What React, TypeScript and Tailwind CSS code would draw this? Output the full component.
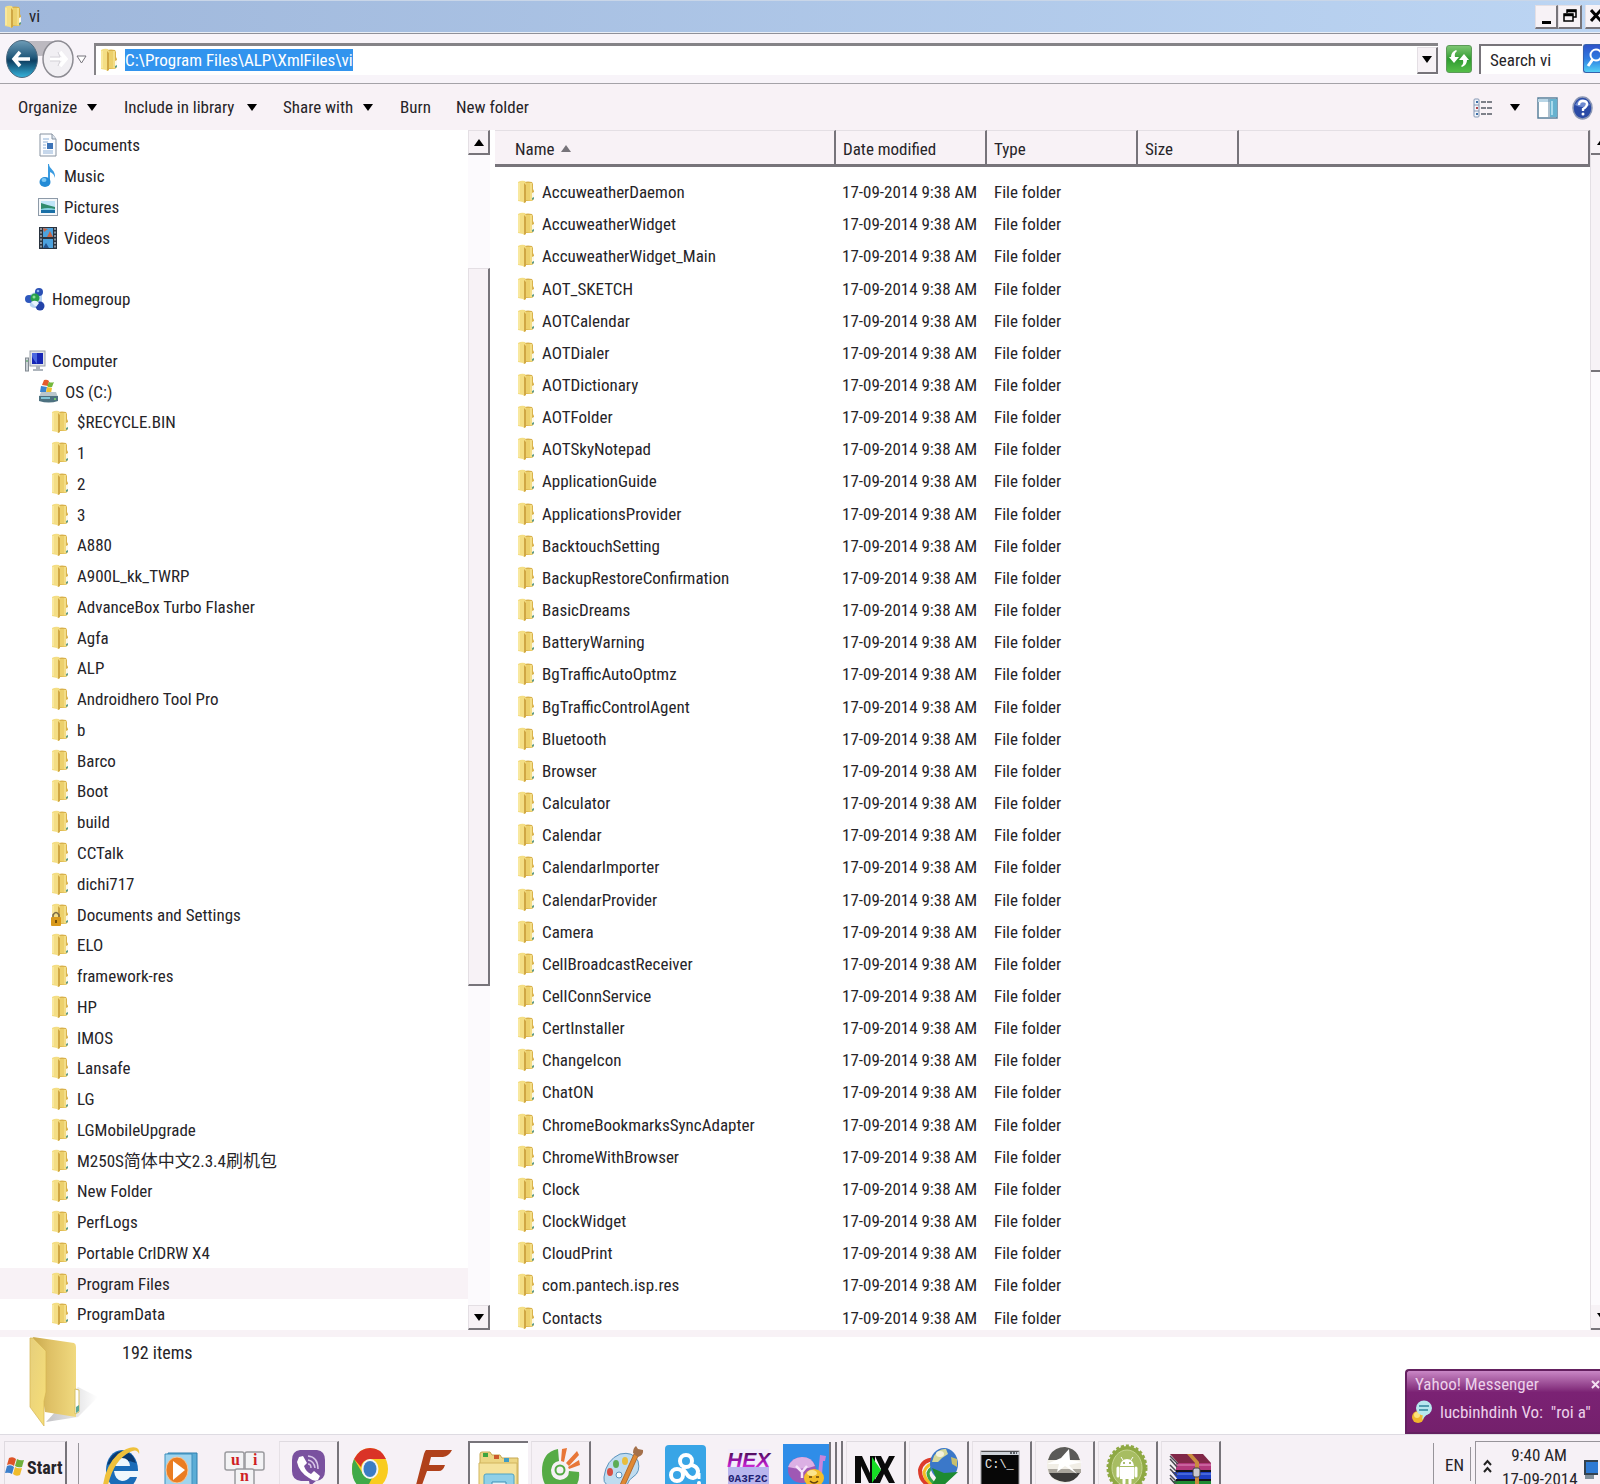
import type { ReactNode } from "react";

type TreeItem = {
  name: string;
  icon?: ReactNode;
  level?: number;
  selected?: boolean;
};

const DATE = "17-09-2014 9:38 AM";

const files = [
  "AccuweatherDaemon", "AccuweatherWidget", "AccuweatherWidget_Main", "AOT_SKETCH",
  "AOTCalendar", "AOTDialer", "AOTDictionary", "AOTFolder", "AOTSkyNotepad",
  "ApplicationGuide", "ApplicationsProvider", "BacktouchSetting",
  "BackupRestoreConfirmation", "BasicDreams", "BatteryWarning", "BgTrafficAutoOptmz",
  "BgTrafficControlAgent", "Bluetooth", "Browser", "Calculator", "Calendar",
  "CalendarImporter", "CalendarProvider", "Camera", "CellBroadcastReceiver",
  "CellConnService", "CertInstaller", "ChangeIcon", "ChatON",
  "ChromeBookmarksSyncAdapter", "ChromeWithBrowser", "Clock", "ClockWidget",
  "CloudPrint", "com.pantech.isp.res", "Contacts",
];

const folders = [
  "$RECYCLE.BIN", "1", "2", "3", "A880", "A900L_kk_TWRP", "AdvanceBox Turbo Flasher",
  "Agfa", "ALP", "Androidhero Tool Pro", "b", "Barco", "Boot", "build", "CCTalk",
  "dichi717", "Documents and Settings", "ELO", "framework-res", "HP", "IMOS",
  "Lansafe", "LG", "LGMobileUpgrade", "M250S简体中文2.3.4刷机包", "New Folder",
  "PerfLogs", "Portable CrlDRW X4", "Program Files", "ProgramData",
];

function FolderIcon({ locked = false }: { locked?: boolean }) {
  return (
    <svg width="18" height="24" viewBox="0 0 18 24" className="shrink-0">
      <path d="M7 2q4-1 8 0l1 2v5l1 2v8l-2 2H7z" fill="#d9b24c" />
      <path d="M8 3h7v18l-7-1z" fill="#ecd06c" />
      <path d="M13 3h2v17h-2z" fill="#f3dd86" />
      <path d="M15 13l2-1v6l-2 1z" fill="#fbf8ea" />
      <path d="M15 18l2-1v2l-2 1z" fill="#5d9c8c" />
      <path d="M1 2q3-2 7-1l1 3v18l-2 1-1-1-5-1z" fill="#f4de85" />
      <path d="M7 3l2 2v17l-2 1z" fill="#d0a744" />
      <path d="M2 3v17" stroke="#fdf2b8" />
      {locked && (
        <g>
          <path d="M2 15v-3q3-5 6 0v3" fill="none" stroke="#7b6a45" strokeWidth="1.6" />
          <rect x="0" y="14" width="10" height="9" rx="1" fill="#d99a1c" />
          <path d="M5 17v3" stroke="#5c3c06" strokeWidth="1.6" />
        </g>
      )}
    </svg>
  );
}

function DocumentIcon() {
  return (
    <svg width="20" height="24" viewBox="0 0 20 24" className="shrink-0">
      <path d="M2 1h12l4 5v17H2z" fill="#fbfdff" stroke="#8793a1" />
      <path d="M14 1v5h4" fill="#dce5ee" stroke="#8793a1" />
      <path d="M5 6h6M5 9h5M5 12h3M5 15h3M5 18h10M5 20h10" stroke="#8fb0d6" />
      <rect x="9" y="10" width="6" height="6" fill="#3c74b8" />
    </svg>
  );
}

function MusicIcon() {
  return (
    <svg width="20" height="24" viewBox="0 0 20 24" className="shrink-0">
      <path d="M11 0c0 5 7 6 6 14-1-4-3-5-5-6v10h-2V0z" fill="#3a9be0" />
      <ellipse cx="7" cy="18" rx="5.500" ry="5" fill="#238bd6" />
      <ellipse cx="6" cy="16" rx="2.500" ry="2" fill="#7cc8f5" />
    </svg>
  );
}

function PictureIcon() {
  return (
    <svg width="20" height="20" viewBox="0 0 20 20" className="shrink-0">
      <rect x="0.5" y="1.500" width="19" height="17" fill="#f4f7fa" stroke="#8d9aa8" />
      <rect x="3" y="4" width="14" height="12" fill="#bfe5f8" />
      <path d="M3 6q6 2 14 4v3H3z" fill="#2f8b6d" />
      <path d="M3 12h14v4H3z" fill="#196fa6" />
      <path d="M3 12q7-2 14 0v1H3z" fill="#83cfe0" />
    </svg>
  );
}

function VideoIcon() {
  return (
    <svg width="20" height="24" viewBox="0 0 20 24" className="shrink-0">
      <rect x="1" y="1" width="18" height="22" fill="#29333f" />
      <path d="M3 2v20M17 2v20" stroke="#aab4be" strokeWidth="1.500" strokeDasharray="2 1.500" />
      <rect x="5" y="2" width="10" height="9" fill="#4da2de" />
      <rect x="5" y="13" width="10" height="9" fill="#4da2de" />
      <path d="M9 11l3-6 3 6zM5 2l5 1-4 3z" fill="#c96644" />
      <path d="M5 22l3-5 3 5z" fill="#23538c" />
    </svg>
  );
}

function HomegroupIcon() {
  return (
    <svg width="21" height="23" viewBox="0 0 21 23" className="shrink-0">
      <path d="M4 8q6-7 13-1v8q-6 8-12 3z" fill="#b8d4f2" />
      <circle cx="14" cy="4" r="4" fill="#2a50b4" />
      <circle cx="4" cy="11" r="4" fill="#2e58bd" />
      <circle cx="15" cy="18" r="4.500" fill="#2343a8" />
      <circle cx="10" cy="10" r="4.500" fill="#28a04a" />
      <path d="M6 14q5-3 8 1l-3 4z" fill="#e7f3fc" />
      <circle cx="9" cy="9" r="1.500" fill="#8ee09b" />
      <circle cx="13" cy="3" r="1.300" fill="#8fb2ee" />
    </svg>
  );
}

function ComputerIcon() {
  return (
    <svg width="21" height="22" viewBox="0 0 21 22" className="shrink-0">
      <rect x="0.5" y="8" width="3" height="13" fill="#cbd1d6" stroke="#828a92" />
      <path d="M1 11h2" stroke="#3d9a4a" />
      <rect x="5" y="1" width="15" height="15" fill="#e1e4e8" stroke="#9aa1aa" />
      <rect x="7" y="3" width="11" height="11" fill="#1727b5" />
      <path d="M7 3h5v11q-4-5-5-8z" fill="#4b68e0" />
      <path d="M11 16h4v3h3v2H8v-2h3z" fill="#aeb5bc" />
    </svg>
  );
}

function DriveIcon() {
  return (
    <svg width="21" height="25" viewBox="0 0 21 25" className="shrink-0">
      <path d="M6 1q3-1 5 1l-1 5-6-1z" fill="#e45a2b" />
      <path d="M11 3q3 1 5 0l-2 5q-3 1-5-1z" fill="#74b83c" />
      <path d="M3 7l6 1-1 5H2z" fill="#3b83cf" />
      <path d="M9 8l5 1-1 5H8z" fill="#f1c12e" />
      <path d="M3 13h15l2 5H1z" fill="#b9c6cc" />
      <path d="M1 17h19v5q-9 3-19 0z" fill="#4d7180" />
      <path d="M3 19h9" stroke="#7fc3d6" strokeWidth="2" />
      <circle cx="17" cy="20" r="1" fill="#7be36d" />
    </svg>
  );
}

const tree: TreeItem[] = [
  { name: "Documents", icon: <DocumentIcon />, level: 1 },
  { name: "Music", icon: <MusicIcon />, level: 1 },
  { name: "Pictures", icon: <PictureIcon />, level: 1 },
  { name: "Videos", icon: <VideoIcon />, level: 1 },
  { name: "" },
  { name: "Homegroup", icon: <HomegroupIcon />, level: 0 },
  { name: "" },
  { name: "Computer", icon: <ComputerIcon />, level: 0 },
  { name: "OS (C:)", icon: <DriveIcon />, level: 1 },
  ...folders.map((name) => ({
    name,
    icon: <FolderIcon locked={name === "Documents and Settings"} />,
    level: 2,
    selected: name === "Program Files",
  })),
];

const indents = ["pl-[25px] gap-[6px]", "pl-[38px] gap-[6px]", "pl-[51px] gap-[8px]"];

function Caret({ up = false }: { up?: boolean }) {
  return (
    <svg width="10" height="7" viewBox="0 0 10 7" className="shrink-0">
      <path d={up ? "M0 7h10L5 0z" : "M0 0h10L5 7z"} fill="#000" />
    </svg>
  );
}

const raised = "bg-[#f7f2f6] border-t border-l border-t-[#e4dfe4] border-l-[#e4dfe4] border-r-2 border-b-2 border-r-[#77747a] border-b-[#77747a]";

function TitleBar() {
  return (
    <header className="flex h-[33px] shrink-0 items-center border-y border-t-[#c9d6e8] border-b-[#e9eef6] bg-linear-to-r from-[#9fb7db] to-[#bcd5f3] pl-1">
      <FolderIcon />
      <h1 className="ml-[7px] flex-1 text-[17px]">vi</h1>
      <button aria-label="Minimize" className={`flex h-[24px] w-[23px] items-end justify-center pb-[3px] ${raised}`}>
        <span className="h-[3px] w-[9px] bg-black" />
      </button>
      <button aria-label="Restore" className={`flex h-[24px] w-[24px] items-center justify-center ${raised}`}>
        <svg width="14" height="14" viewBox="0 0 14 14" fill="none" stroke="#000">
          <path d="M4 4V1h9v7h-3" strokeWidth="1.500" />
          <path d="M4 2h9" strokeWidth="2.500" />
          <rect x="1" y="5" width="9" height="7" strokeWidth="1.500" />
          <path d="M1 6h9" strokeWidth="2.500" />
        </svg>
      </button>
      <button aria-label="Close" className="ml-[3px] flex h-[24px] w-[15px] items-center justify-start overflow-hidden border-b-2 border-l border-b-[#77747a] border-l-[#e4dfe4] bg-[#f7f2f6] pl-1">
        <svg width="13" height="13" viewBox="0 0 13 13" className="shrink-0">
          <path d="M1 1l10 11M11 1L1 12" stroke="#000" strokeWidth="3" />
        </svg>
      </button>
    </header>
  );
}

function AddressBar() {
  return (
    <div className="flex h-[51px] shrink-0 items-center border-y border-t-[#8f9099] border-b-[#a5a3a8] bg-[#f8f4f9] pl-[6px]">
      <svg width="82" height="40" viewBox="0 0 82 40" className="shrink-0" role="img" aria-label="Back and forward">
        <defs>
          <linearGradient id="back" x1="0" y1="0" x2="0" y2="1">
            <stop offset="0" stopColor="#6f9db8" />
            <stop offset="0.45" stopColor="#235a7c" />
            <stop offset="0.55" stopColor="#0d3f62" />
            <stop offset="1" stopColor="#37b4dc" />
          </linearGradient>
        </defs>
        <path d="M16 2h36v12q-18 6-36 0z" fill="#bcb9c0" />
        <ellipse cx="16" cy="20" rx="15.500" ry="18.500" fill="url(#back)" stroke="#4c6a80" />
        <path d="M24 20H9M14 13l-6 7 6 7" stroke="#fff" strokeWidth="3.500" fill="none" />
        <ellipse cx="52" cy="20" rx="15" ry="18" fill="#f1eff3" stroke="#8c8b92" strokeWidth="1.500" />
        <path d="M44 20h15M54 13l6 7-6 7" stroke="#fff" strokeWidth="3.500" fill="none" />
        <path d="M44 18h10l-2-5M44 22h10l-2 5" stroke="#d4d2d8" fill="none" />
        <path d="M71 17h9l-4.500 7z" fill="#fff" stroke="#77747c" />
      </svg>
      <div className="ml-[6px] flex h-[32px] min-w-0 flex-1 items-center border-t-[3px] border-l-2 border-t-[#858387] border-l-[#858387] bg-white pl-[4px]">
        <FolderIcon />
        <input
          aria-label="Address"
          defaultValue="C:\Program Files\ALP\XmlFiles\vi"
          className="ml-[7px] field-sizing-content h-[22px] bg-[#3294ee] text-[17px] leading-[22px] text-white outline-none"
        />
        <button aria-label="Previous locations" className={`ml-auto flex h-[27px] w-[21px] items-center justify-center ${raised}`}>
          <Caret />
        </button>
      </div>
      <button aria-label="Refresh" className="ml-[8px] h-[28px] w-[26px] rounded-[3px] border border-[#5c9a58] bg-linear-to-b from-[#7cc672] via-[#2f9c31] to-[#54bd48]">
        <svg width="24" height="26" viewBox="0 0 24 26" fill="#fff">
          <path d="M9 4l1 1q-3 2-2 6h4l-5 6-5-6h2q0-5 5-7z" />
          <path d="M15 21l-1-1q3-2 2-6h-4l5-6 5 6h-2q0 5-5 7z" />
        </svg>
      </button>
      <input
        type="text"
        aria-label="Search"
        placeholder="Search vi"
        className="ml-[7px] h-[30px] w-[103px] border-t-2 border-l-2 border-t-[#77747a] border-l-[#77747a] bg-white pl-[9px] text-[17px] outline-none placeholder:text-[#262428]"
      />
      <button aria-label="Go" className="ml-px h-[29px] w-[17px] overflow-hidden rounded-l-[3px] border border-r-0 border-[#3561ad] bg-linear-to-b from-[#2e52c9] via-[#2f7be0] to-[#55d0f5]">
        <svg width="16" height="27" viewBox="0 0 16 27" fill="none" stroke="#fff">
          <circle cx="12" cy="10" r="5.500" strokeWidth="2" />
          <path d="M9 14l-5 7" strokeWidth="3" />
        </svg>
      </button>
    </div>
  );
}

function Toolbar() {
  return (
    <nav className="flex h-[46px] shrink-0 items-center bg-[#f8f2f6] pt-px pr-[7px] pl-[18px] text-[17px] whitespace-nowrap">
      <button className="flex w-[79px] items-center justify-between">Organize <Caret /></button>
      <button className="ml-[27px] flex w-[133px] items-center justify-between">Include in library <Caret /></button>
      <button className="ml-[26px] flex w-[90px] items-center justify-between">Share with <Caret /></button>
      <button className="ml-[27px] w-[31px] text-left">Burn</button>
      <button className="ml-[25px]">New folder</button>
      <button aria-label="Change your view" className="ml-auto flex items-center gap-[17px]">
        <svg width="20" height="20" viewBox="0 0 20 20">
          <rect x="1" y="1" width="5" height="18" rx="1" fill="#f4f5fa" stroke="#8498b4" />
          <path d="M1 7h5M1 13h5" stroke="#8498b4" />
          <path d="M3 4h2M3 16h2" stroke="#3c6ea6" strokeWidth="2" />
          <path d="M3 10h2" stroke="#b0464c" strokeWidth="2" />
          <path d="M8 4h12M8 10h12M8 16h12" stroke="#565c66" strokeWidth="1.500" strokeDasharray="5 1" />
        </svg>
        <Caret />
      </button>
      <button aria-label="Preview pane" className="ml-[17px]">
        <svg width="21" height="22" viewBox="0 0 21 22">
          <rect x="1" y="1" width="19" height="20" fill="#fff" stroke="#5a819c" strokeWidth="1.500" />
          <path d="M1 2h19v3H1z" fill="#b9d6e6" />
          <rect x="13" y="2" width="7" height="18" fill="#66b2cf" />
          <path d="M15 4v14" stroke="#a9dbec" strokeWidth="2" />
          <path d="M12 2v18" stroke="#5a819c" />
        </svg>
      </button>
      <button aria-label="Get help" className="ml-[14px]">
        <svg width="21" height="24" viewBox="0 0 21 24">
          <ellipse cx="10.500" cy="12" rx="9.500" ry="11" fill="#2b4ba6" stroke="#8b97b4" strokeWidth="1.500" />
          <path d="M3 9q7-12 15 0-8 4-15 0z" fill="#6f8bd0" />
          <path d="M7 9q0-4 4-4t4 3q0 3-4 5v2" fill="none" stroke="#fff" strokeWidth="2.300" />
          <circle cx="11" cy="18" r="1.500" fill="#fff" />
        </svg>
      </button>
    </nav>
  );
}

function FolderTree() {
  return (
    <aside className="flex w-[494px] shrink-0 bg-white">
      <ul className="flex min-w-0 flex-1 flex-col">
        {tree.map((item, i) => (
          <li key={i} className={`flex min-h-0 flex-1 items-center ${item.selected ? "bg-[#f8f2f6]" : ""}`}>
            {item.name && (
              <button className={`flex items-center text-[17px] leading-[24px] whitespace-nowrap ${indents[item.level ?? 0]}`}>
                {item.icon}
                {item.name}
              </button>
            )}
          </li>
        ))}
      </ul>
      <div className="mr-[4px] flex w-[22px] flex-col bg-[#fcfafd]">
        <button aria-label="Scroll up" className={`flex h-[25px] items-center justify-center ${raised}`}><Caret up /></button>
        <div className="flex-[113]" />
        <div className={`flex-[717] ${raised}`} />
        <div className="flex-[320]" />
        <button aria-label="Scroll down" className={`flex h-[25px] items-center justify-center ${raised}`}><Caret /></button>
      </div>
    </aside>
  );
}

const th = "border-r-2 border-b-3 border-[#77747a] border-t border-t-[#e4dfe4] bg-[#f8f2f6] pt-[2px] pl-[7px] text-left font-normal";

function FileList() {
  return (
    <main className="flex min-w-0 flex-1 bg-white pl-px">
      <div className="-mb-1 min-w-0 flex-1">
        <table className="h-full w-full table-fixed border-separate border-spacing-0 text-[17px] leading-[24px]">
          <colgroup>
            <col className="w-[341px]" />
            <col className="w-[151px]" />
            <col className="w-[151px]" />
            <col className="w-[101px]" />
            <col />
          </colgroup>
          <thead>
            <tr className="h-[37px]">
              <th className="border-t border-r-2 border-b-3 border-[#77747a] border-t-[#e4dfe4] bg-[#f8f2f6] pt-[2px] pl-[20px] text-left font-normal">
                Name
                <svg width="10" height="7" viewBox="0 0 10 7" className="mb-[3px] ml-[7px] inline">
                  <path d="M0 7h10L5 0z" fill="#77747a" />
                </svg>
              </th>
              <th className={th}>Date modified</th>
              <th className={th}>Type</th>
              <th className={th}>Size</th>
              <th className={th} aria-label="Empty" />
            </tr>
            <tr className="h-[9px]" />
          </thead>
          <tbody>
            {files.map((name) => (
              <tr key={name}>
                <td className="p-0 pl-[22px]">
                  <div className="flex items-center gap-[7px]">
                    <FolderIcon />
                    {name}
                  </div>
                </td>
                <td className="p-0 pl-[6px] whitespace-nowrap">{DATE}</td>
                <td className="p-0 pl-[7px]">File folder</td>
                <td className="p-0" />
                <td className="p-0" />
              </tr>
            ))}
          </tbody>
        </table>
      </div>
      <div className="flex w-[10px] flex-col border-l border-[#e4dfe4] bg-[#fcfafd]">
        <button aria-label="Scroll list up" className="flex h-[25px] items-center overflow-hidden border-b-2 border-[#77747a] bg-[#f7f2f6] pl-[6px]"><Caret up /></button>
        <div className="flex-[215] border-b-2 border-[#77747a] bg-[#f7f2f6]" />
        <div className="flex-[935]" />
        <button aria-label="Scroll list down" className="flex h-[25px] items-center overflow-hidden border-b-2 border-[#77747a] bg-[#f7f2f6] pl-[6px]"><Caret /></button>
      </div>
    </main>
  );
}

function DetailsPane() {
  return (
    <section className="flex h-[104px] shrink-0 items-start border-t-[7px] border-[#f8f2f6] bg-white pl-[28px]">
      <svg width="72" height="92" viewBox="0 0 72 92" className="shrink-0">
        <defs>
          <linearGradient id="flap" x1="0" y1="0" x2="1" y2="1">
            <stop offset="0" stopColor="#e6cf7c" />
            <stop offset="1" stopColor="#f7df78" />
          </linearGradient>
          <linearGradient id="inside" x1="0" y1="0" x2="1" y2="0">
            <stop offset="0" stopColor="#c9a94d" />
            <stop offset="0.4" stopColor="#dfc166" />
            <stop offset="1" stopColor="#f0d97f" />
          </linearGradient>
          <linearGradient id="shade" x1="0" y1="0" x2="1" y2="0">
            <stop offset="0" stopColor="#9a9aa0" />
            <stop offset="1" stopColor="#fff" />
          </linearGradient>
        </defs>
        <path d="M50 50l20 10-20 20-32 5z" fill="url(#shade)" opacity="0.6" />
        <path d="M5 0l41 6q2 1 2 4v70l-31-5z" fill="url(#inside)" />
        <path d="M47 52l4 1v22l-4 2z" fill="#fff" stroke="#d5c069" />
        <path d="M48 70l3-2v6l-3 2z" fill="#5aa795" />
        <path d="M2 1h3l13 13v41l-2 9v25L2 70z" fill="url(#flap)" stroke="#d6b552" strokeWidth="0.7" />
      </svg>
      <p className="mt-[4px] ml-[22px] text-[18px] leading-[24px]">192 items</p>
    </section>
  );
}

function Messenger() {
  return (
    <div role="status" className="absolute right-0 bottom-[50px] h-[65px] w-[195px] rounded-tl-[4px] border-2 border-r-0 border-[#642060] bg-linear-to-b from-[#c987c6] via-[#7b2274] via-35% to-[#74206c] text-[17px] leading-[26px] whitespace-nowrap text-[#ecd0ea]">
      <div className="flex items-center justify-between pl-[8px]">
        <span>Yahoo! Messenger</span>
        <button aria-label="Dismiss" className="w-[9px] overflow-hidden">
          <svg width="9" height="9" viewBox="0 0 9 9"><path d="M1 1l7 7M8 1L1 8" stroke="#f4dff2" strokeWidth="2" /></svg>
        </button>
      </div>
      <div className="mt-[2px] flex items-center gap-[8px] pl-[4px]">
        <svg width="21" height="24" viewBox="0 0 21 24" className="shrink-0">
          <circle cx="7" cy="17" r="6" fill="#f0b62c" />
          <circle cx="6" cy="15" r="3" fill="#fbe27d" />
          <ellipse cx="13" cy="8" rx="8" ry="7.500" fill="#b7e8ee" />
          <path d="M12 14l-1 6 6-7z" fill="#b7e8ee" />
          <path d="M8 6h10M8 10h9" stroke="#31859c" strokeWidth="1.500" />
        </svg>
        <span className="whitespace-pre">lucbinhdinh Vo:  "roi a"</span>
      </div>
    </div>
  );
}

/* Task icons share a 60 x 44 box; the screen edge cuts them off at the bottom. */
const ieIcon = (
  <>
    <ellipse cx="32" cy="29" rx="16" ry="20" fill="#1a6cb8" />
    <path d="M17 24q4-13 15-14 11 1 14 12-13-6-29 2z" fill="#0b3a70" />
    <path d="M24 25q1-8 8-8t8 8zM24 30h25v6h-9q-3 4-8 4-7-1-8-10z" fill="#eef7fd" />
    <path d="M13 44q3-20 15-31Q40 4 47 7q3 2 2 6-2-6-9-2-16 8-22 33z" fill="#efc13c" />
  </>
);

const wmpIcon = (
  <>
    <path d="M15 12h29v32H15z" fill="#5badd6" stroke="#2f7fae" />
    <path d="M12 13h27v31H12z" fill="#9fd4ee" stroke="#3d8fbd" />
    <ellipse cx="24" cy="29" rx="11" ry="13" fill="#ea7d22" stroke="#f7c79b" />
    <path d="M20 20l12 9-12 10z" fill="#fff" />
  </>
);

const unikeyIcon = (
  <g stroke="#9b9b9f" strokeWidth="1.500" fill="#f3f3f5">
    <rect x="9" y="11" width="19" height="18" rx="2" />
    <rect x="29" y="11" width="19" height="18" rx="2" />
    <rect x="19" y="28" width="19" height="18" rx="2" />
    <g fill="#cf1f24" stroke="none" fontFamily="Liberation Serif, serif" fontWeight="bold" fontSize="16">
      <text x="15" y="24">u</text>
      <text x="37" y="24">i</text>
      <text x="24" y="40">n</text>
    </g>
  </g>
);

const viberIcon = (
  <>
    <path d="M20 8h17q8 1 8 10v11q0 9-9 10l-6 5-1-5h-8q-9-1-9-10V18q0-9 8-10z" fill="#7a519f" />
    <path d="M19 15l4-1 4 7-3 3q2 6 7 8l3-3 6 5-2 4q-4 2-9-2-10-6-12-16z" fill="#fff" />
    <path d="M28 14q10 1 10 13M28 18q6 1 7 8M28 22q3 0 3 4" stroke="#d8c7e8" strokeWidth="1.500" fill="none" />
  </>
);

const chromeIcon = (
  <>
    <ellipse cx="28" cy="28" rx="18" ry="21" fill="#f9cc1f" />
    <path d="M12 18q6-11 16-11 11 0 16 11H28q-8 1-9 8z" fill="#da3327" />
    <path d="M12 18l9 15q3 5 9 4l-6 12q-14-4-14-21 0-6 2-10z" fill="#3faa49" />
    <ellipse cx="28" cy="28" rx="8.500" ry="10" fill="#f2f4f5" />
    <ellipse cx="28" cy="28" rx="6.500" ry="8" fill="#3b7cc4" />
  </>
);

const fIcon = (
  <path d="M21 9h26q-3 6-9 7H26l-2 8h16q-2 6-6 6H22l-5 14h-6l8-31q1-3 2-4z" fill="#b0411b" />
);

const explorerIcon = (
  <>
    <path d="M10 11q0-2 2-2h8l2 3h8l2 3h7l9 0v29H10z" fill="#ecd684" stroke="#c6a852" />
    <path d="M9 20h38v24H9z" fill="#f5e39d" stroke="#d2b55f" />
    <path d="M13 10h5v4h-5z" fill="#3fa53f" />
    <path d="M24 12h5v4h-5z" fill="#cc5a2c" />
    <path d="M34 15h5v4h-5z" fill="#3f9cc4" />
    <path d="M14 33q0-2 2-2h26q2 0 2 2v11H14z" fill="#8fd0e8" stroke="#4fa3c4" />
    <path d="M22 44v-5h14v5" fill="#e6f6fb" stroke="#3c8fb6" />
  </>
);

const cocIcon = (
  <>
    <path d="M26 7q-16 3-16 22 0 9 4 15h30q4-6 3-14l-10-1q0 8-9 9-9-1-9-10 1-8 8-9z" fill="#55ab45" />
    <circle cx="28" cy="28" r="4.500" fill="none" stroke="#55ab45" strokeWidth="2" />
    <path d="M30 7l5-1-3 14-3-1zM45 9l2 4-10 11-3-3zM47 18l1 5-11 4-1-2z" fill="#e87638" />
  </>
);

const paintIcon = (
  <>
    <path d="M10 36q2-17 16-23 13-3 18 7 3 11-5 16-4 2-6 8H13q-4-3-3-8z" fill="#bfdcf0" stroke="#5b93bd" />
    <ellipse cx="16" cy="31" rx="3" ry="4" fill="#d84e42" />
    <ellipse cx="22" cy="23" rx="3" ry="4" fill="#5cad54" />
    <ellipse cx="31" cy="20" rx="3" ry="4" fill="#e8bd3c" />
    <ellipse cx="25" cy="34" rx="3" ry="3" fill="#f6fafd" stroke="#5b93bd" />
    <path d="M40 13l4 2-13 29h-5z" fill="#df8934" stroke="#a45a20" strokeWidth="0.800" />
    <path d="M39 12q0-5 3-7l2 3 5 1q1 5-5 7z" fill="#a4704a" />
  </>
);

const cloudIcon = (
  <>
    <rect x="8" y="4" width="41" height="46" rx="4" fill="#38a5e6" />
    <g fill="none" stroke="#fff" strokeWidth="4">
      <ellipse cx="29" cy="20" rx="6" ry="6" />
      <ellipse cx="20" cy="34" rx="6" ry="6" />
      <path d="M34 24q6 1 7 6 0 6-5 7-4 0-7-5l-4-5" />
    </g>
    <path d="M42 32v6" stroke="#fff" strokeWidth="3" />
    <circle cx="42" cy="42" r="2" fill="#fff" />
  </>
);

const hexIcon = (
  <>
    <path d="M8 8h41v18H8z" fill="#f3edfb" />
    <path d="M8 26h41v18H8z" fill="#b8b5ee" />
    <defs>
      <linearGradient id="hex" x1="0" y1="0" x2="0" y2="1">
        <stop offset="0.2" stopColor="#4a0d58" />
        <stop offset="0.6" stopColor="#a514b4" />
        <stop offset="1" stopColor="#e83fe8" />
      </linearGradient>
    </defs>
    <text x="7" y="26" fill="url(#hex)" fontFamily="Liberation Sans, sans-serif" fontWeight="bold" fontStyle="italic" fontSize="21">HEX</text>
    <text x="8" y="41" fill="#202071" fontFamily="Liberation Mono, monospace" fontWeight="bold" fontSize="11">0A3F2C</text>
  </>
);

const yahooIcon = (
  <>
    <path d="M0 3h46v41H0z" fill="#2f8de8" />
    <path d="M37 14l6 1-1 5-2 0-1 14h-4z" fill="#c885dc" />
    <ellipse cx="19" cy="29" rx="14" ry="13" fill="#9f58b4" />
    <path d="M5 26q4-10 14-10 10 0 13 9-12 5-27 1z" fill="#dcb0e4" />
    <path d="M13 25l6 6 5-6M19 31v6" stroke="#f6e3fa" strokeWidth="2.500" fill="none" />
    <ellipse cx="31" cy="37" rx="10" ry="9" fill="#f4bd2a" />
    <ellipse cx="29" cy="32" rx="5" ry="3" fill="#fce58c" />
    <path d="M26 36h3M33 36h3M27 40q4 4 8 0" stroke="#65430c" strokeWidth="1.500" fill="none" />
  </>
);

const nxIcon = (
  <>
    <path d="M8 14h7l8 17V14h5v27h-6l-8-17v17H8z" fill="#0a0a0a" />
    <path d="M28 14h6l4 8 4-8h6l-7 13 7 14h-6l-5-9-4 9h-7l8-14z" fill="#0a0a0a" />
    <path d="M25 15l9 13-9 13z" fill="#16dc25" />
  </>
);

const idmIcon = (
  <>
    <path d="M30 18q-17-3-20 10 0 12 10 15" fill="none" stroke="#dd3c2b" strokeWidth="4" />
    <path d="M30 21q-13-1-16 9 0 8 9 13" fill="none" stroke="#f3bf23" strokeWidth="3" />
    <path d="M30 24q-10 0-12 7 0 6 8 12" fill="none" stroke="#3ba848" strokeWidth="3" />
    <ellipse cx="34" cy="22" rx="14" ry="16" fill="#3b78c9" />
    <path d="M24 14q5-8 12-7l2 5-6 4-4 4-6 0z" fill="#d5d89a" />
    <ellipse cx="30" cy="12" rx="4" ry="3" fill="#f4f3dc" />
    <path d="M41 15l6 2 0 8-5-3z" fill="#c8bf6e" />
    <path d="M22 26l12 5 14-1-15 14H21l5-8z" fill="#1d8b31" />
  </>
);

const cmdIcon = (
  <>
    <rect x="8" y="9" width="38" height="36" fill="#070707" stroke="#9b9b9f" />
    <path d="M8 10h38v3H8z" fill="#cdd2d8" />
    <path d="M37 11h7" stroke="#5b6066" strokeDasharray="2 1" strokeWidth="2" />
    <text x="12" y="26" fill="#e8e8e8" fontFamily="Liberation Mono, monospace" fontSize="12">C:\_</text>
  </>
);

const toolIcon = (
  <>
    <ellipse cx="28" cy="23" rx="17" ry="18" fill="#f1eee6" />
    <path d="M14 13q5-8 15-8 9 1 13 8 1 3 2 5H12z" fill="#5b5a58" />
    <path d="M13 31h31q-5 9-15 9-12-1-16-9z" fill="#3c3b3a" />
    <path d="M12 27h33v4H13z" fill="#a9a59d" />
    <path d="M11 22l14-6 8-9 1 11 13 2-14 3 8 9-12-8-8 6 2-8z" fill="#fff" />
    <path d="M12 43h7M24 43h5M32 43h13" stroke="#57524c" strokeWidth="2" />
  </>
);

const androidIcon = (
  <>
    <ellipse cx="28" cy="26" rx="19" ry="22" fill="#8fa944" stroke="#8fa944" strokeWidth="3" strokeDasharray="3 2" />
    <ellipse cx="28" cy="26" rx="15" ry="18" fill="#a7bd62" stroke="#c5d590" />
    <path d="M21 24q1-7 7-7t7 7zM21 25h14v12H21z" fill="#fff" />
    <path d="M24 18l-2-3M32 18l2-3" stroke="#fff" />
    <path d="M19 26v8M37 26v8M25 35v6M31 35v6" stroke="#fff" strokeWidth="3" strokeLinecap="round" />
    <circle cx="25" cy="21" r="1" fill="#8fa944" />
    <circle cx="31" cy="21" r="1" fill="#8fa944" />
  </>
);

const rarIcon = (
  <>
    <path d="M8 12h33l8 9H16z" fill="#812748" />
    <path d="M14 21h35v8H14z" fill="#b2387b" />
    <path d="M10 30h39v8H16z" fill="#1d3ec4" />
    <path d="M10 39h39v6H16z" fill="#1f8c32" />
    <path d="M14 23h35" stroke="#e08cc0" />
    <path d="M15 32h34" stroke="#6f8ff0" />
    <path d="M8 14l8 8M8 17l7 8M8 23l8 8M8 27l7 7M8 33l7 7M8 36l7 8" stroke="#4b4b52" strokeWidth="1.500" />
    <path d="M14 29h35M14 38h35" stroke="#15151d" strokeWidth="2" />
    <path d="M25 12l8 9v23h4V20l-7-8z" fill="#c98d3e" />
    <rect x="31" y="26" width="7" height="9" rx="2" fill="#c9c9cf" stroke="#3f3f45" />
  </>
);

const tasks: { label: string; icon: ReactNode; state?: "open" | "active" | "stack" }[] = [
  { label: "Internet Explorer", icon: ieIcon },
  { label: "Media Player", icon: wmpIcon },
  { label: "UniKey", icon: unikeyIcon },
  { label: "Viber", icon: viberIcon, state: "open" },
  { label: "Chrome", icon: chromeIcon },
  { label: "Flash tool", icon: fIcon },
  { label: "Explorer", icon: explorerIcon, state: "active" },
  { label: "Browser", icon: cocIcon, state: "open" },
  { label: "Paint", icon: paintIcon },
  { label: "Cloud", icon: cloudIcon },
  { label: "Hex editor", icon: hexIcon },
  { label: "Yahoo Messenger", icon: yahooIcon, state: "stack" },
  { label: "NX", icon: nxIcon, state: "open" },
  { label: "Download Manager", icon: idmIcon, state: "open" },
  { label: "Command Prompt", icon: cmdIcon, state: "open" },
  { label: "Phone tool", icon: toolIcon, state: "open" },
  { label: "Android", icon: androidIcon, state: "open" },
  { label: "WinRAR", icon: rarIcon, state: "open" },
];

const taskStates = {
  open: "border-t border-l border-t-[#dfdae0] border-l-[#e6e1e6] border-r-2 border-r-[#77747a]",
  active: "border-t-2 border-l-2 border-[#77747a] bg-white",
  stack: "border-r-2 border-r-[#77747a]",
};

function Taskbar() {
  return (
    <footer className="flex h-[50px] shrink-0 overflow-hidden border-t border-[#dedbe2] bg-[#f6f1f6] pt-[6px]">
      <button className="ml-[4px] flex h-[60px] w-[63px] items-start border-t border-r-2 border-l border-t-[#dfdae0] border-r-[#77747a] border-l-[#dfdae0] pt-[14px]">
        <svg width="20" height="22" viewBox="0 0 20 22" className="shrink-0">
          <path d="M4 2q4-2 7 1l-2 7q-3-3-7-1z" fill="#de5428" />
          <path d="M12 3q3 2 7 1l-2 7q-4 1-7-1z" fill="#6faf3a" />
          <path d="M2 10q4-2 7 1l-2 7q-3-2-7-1z" fill="#3c7fcb" />
          <path d="M10 11q3 2 7 1l-2 7q-4 2-7-1z" fill="#f0bc2c" />
        </svg>
        <span className="ml-[2px] text-[18px] leading-[24px] font-bold">Start</span>
      </button>
      <div className="mt-[2px] ml-[11px] w-px bg-[#97949a]" />
      <ul className="ml-[11px] flex">
        {tasks.map((task) => (
          <li key={task.label} className="w-[63px] pr-[3px]">
            <button aria-label={task.label} className={`relative block h-[60px] w-[60px] ${task.state ? taskStates[task.state] : ""}`}>
              <svg width="60" height="44" viewBox="0 0 60 44" className="absolute top-0 left-0">
                {task.icon}
                {task.state === "stack" && <path d="M47 1v43M53 1v43" stroke="#77747a" strokeWidth="2" />}
              </svg>
            </button>
          </li>
        ))}
      </ul>
      <div className="ml-auto flex w-[167px] text-[17px]">
        <div className="mt-[2px] w-px bg-[#97949a]" />
        <span className="ml-[11px] pt-[11px] leading-[26px]">EN</span>
        <div className="mt-[6px] ml-auto h-[34px] w-px bg-[#97949a]" />
        <div className="ml-[4px] flex h-[60px] w-[125px] border-t border-l border-[#97949a]">
          <svg width="9" height="14" viewBox="0 0 9 14" className="mt-[17px] ml-[7px] shrink-0" fill="none" stroke="#222" strokeWidth="2">
            <path d="M1 6l3.500-4L8 6M1 13l3.500-4L8 13" />
          </svg>
          <time className="ml-[10px] block w-[74px] pt-px text-center leading-[24px] whitespace-nowrap">
            9:40 AM<br />17-09-2014
          </time>
          <svg width="14" height="20" viewBox="0 0 14 20" className="mt-[18px] ml-[8px] shrink-0">
            <rect x="1" y="1" width="18" height="13" fill="#2e7bd4" stroke="#33424f" strokeWidth="2" />
            <path d="M1 15h9v4H1z" fill="#7f8e99" />
          </svg>
        </div>
      </div>
    </footer>
  );
}

export default function App() {
  return (
    <div className="relative flex h-screen flex-col overflow-hidden bg-white font-['Roboto_Condensed','Roboto','Noto_Sans_CJK_SC',sans-serif] text-[#262428]">
      <TitleBar />
      <AddressBar />
      <Toolbar />
      <div className="flex min-h-0 flex-1 overflow-hidden">
        <FolderTree />
        <FileList />
      </div>
      <DetailsPane />
      <Taskbar />
      <Messenger />
    </div>
  );
}
